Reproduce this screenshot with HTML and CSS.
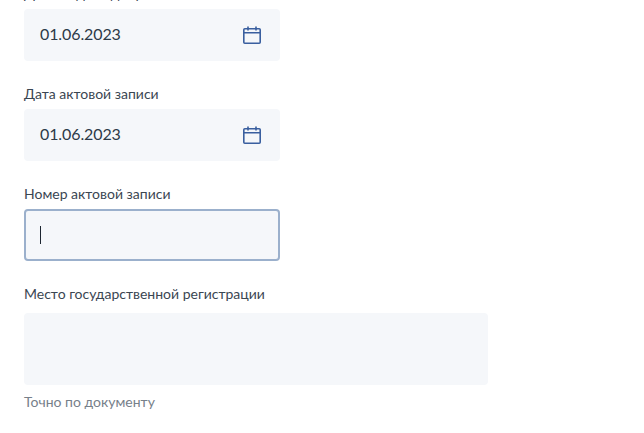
FILE: index.html
```html
<!DOCTYPE html>
<html lang="en">
<head>
    <meta charset="UTF-8">
    <title>Свидетельство</title>
    <link rel="stylesheet" href="styles.css">
</head>
<body>
    <form class="form">
        <div class="field">
            <label class="label">Дата выдачи документа</label>
            <div class="input">
                <span class="value">01.06.2023</span>
                <svg class="calendar" viewBox="0 0 18 18" fill="none" stroke="#3a5f9f" stroke-width="1.6">
                    <rect x="0.8" y="2.8" width="16.4" height="14.4" rx="1"/>
                    <path d="M1 6.75h16M5 0.5v4M13 0.5v4"/>
                </svg>
            </div>
        </div>
        <div class="field">
            <label class="label">Дата актовой записи</label>
            <div class="input">
                <span class="value">01.06.2023</span>
                <svg class="calendar" viewBox="0 0 18 18" fill="none" stroke="#3a5f9f" stroke-width="1.6">
                    <rect x="0.8" y="2.8" width="16.4" height="14.4" rx="1"/>
                    <path d="M1 6.75h16M5 0.5v4M13 0.5v4"/>
                </svg>
            </div>
        </div>
        <div class="field">
            <label class="label">Номер актовой записи</label>
            <div class="input focused">
                <span class="caret"></span>
            </div>
        </div>
        <div class="field">
            <label class="label wide">Место государственной регистрации</label>
            <div class="textarea"></div>
            <div class="hint">Точно по документу</div>
        </div>
    </form>
</body>
</html>
```
FILE: styles.css
```css
html {
    height: 100%;
    overflow: hidden;
}

body {
    margin: 0;
    background-color: #fff;
    font-family: 'Lato', sans-serif;
    color: #2c3a48;
}

.form {
    display: flex;
    flex-direction: column;
    gap: 24px;
    margin-top: -15px;
    padding-left: 24px;
}

.field {
    display: flex;
    flex-direction: column;
}

.label {
    font-size: 14px;
    line-height: 16px;
    padding-top: 1px;
    margin-bottom: 7px;
    color: #3a4652;
}

.label.wide {
    margin-bottom: 11px;
}

.input {
    box-sizing: border-box;
    width: 256px;
    height: 52px;
    display: flex;
    align-items: center;
    justify-content: space-between;
    padding: 0 19px 0 16px;
    background-color: #f5f7fa;
    border-radius: 4px;
}

.input.focused {
    border: 2px solid #9bb0cc;
    padding: 0 14px;
}

.value {
    font-size: 16px;
    letter-spacing: -0.1px;
    padding-bottom: 4px;
}

.calendar {
    width: 18px;
    height: 18px;
}

.caret {
    width: 1px;
    height: 18px;
    background-color: #1c2530;
}

.textarea {
    width: 464px;
    height: 72px;
    background-color: #f5f7fa;
    border-radius: 4px;
}

.hint {
    margin-top: 9px;
    font-size: 14px;
    line-height: 16px;
    color: #77808a;
}
```
